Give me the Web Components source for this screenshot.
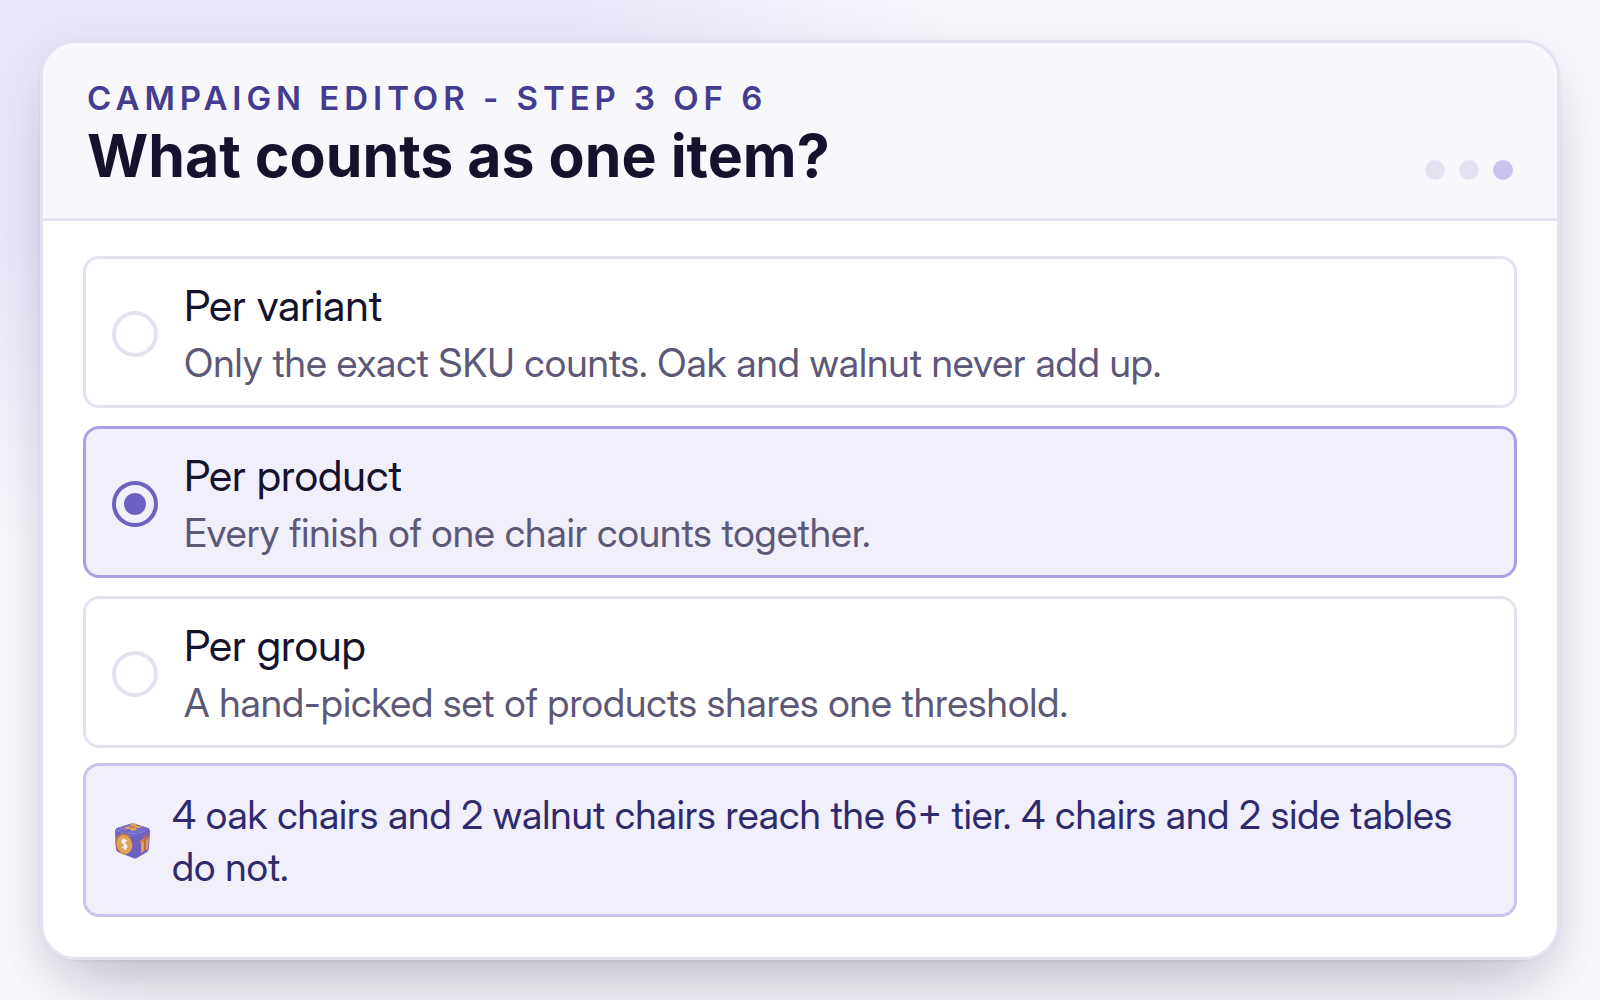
<!DOCTYPE html>
<html lang="en">
<head>
<meta charset="utf-8">
<meta name="viewport" content="width=device-width, initial-scale=1">
<title>Campaign editor</title>
<style>
*{box-sizing:border-box}
html{min-height:100%;background:#f8f7fc}
body{margin:0;padding:40px;min-height:100vh;font-family:"Inter Display",Inter,"Liberation Sans",sans-serif;color:#15122e;
background:radial-gradient(ellipse 780px 560px at 12% 0,#eae7f9 0%,#eae7f9 48%,#f8f7fc 100%) no-repeat #f8f7fc}
</style>
</head>
<body>
<editor-card>
  <step-header slot="header">
    <span slot="eyebrow">CAMPAIGN EDITOR - STEP 3 OF 6</span>
    <span slot="title">What counts as one item?</span>
  </step-header>
  <option-list>
    <option-card><span slot="label">Per variant</span><span slot="hint">Only the exact SKU counts. Oak and walnut never add up.</span></option-card>
    <option-card checked><span slot="label">Per product</span><span slot="hint">Every finish of one chair counts together.</span></option-card>
    <option-card><span slot="label">Per group</span><span slot="hint">A hand-picked set of products shares one threshold.</span></option-card>
  </option-list>
  <info-note>4 oak chairs and 2 walnut chairs reach the 6+ tier. 4 chairs and 2 side tables do not.</info-note>
</editor-card>

<script>
const define = (name, html, setup) => customElements.define(name, class extends HTMLElement {
  constructor() {
    super();
    const template = document.createElement('template');
    template.innerHTML = '<style>*{box-sizing:border-box}</style>' + html;
    this.attachShadow({mode: 'open'}).append(template.content.cloneNode(true));
    if (setup) setup(this, this.shadowRoot);
  }
});

define('editor-card', `
<style>
:host{display:block;border:3px solid #e4e2f0;border-radius:36px;background:#fff;overflow:hidden;
  box-shadow:0 1px 3px rgba(21,18,46,.06),0 44px 64px -36px rgba(21,18,46,.24),0 16px 56px rgba(21,18,46,.1)}
main{display:flex;flex-direction:column;gap:15px;padding:35px 40px 40px}
</style>
<slot name="header"></slot>
<main><slot></slot></main>`);

define('step-header', `
<style>
:host{display:block}
header{display:flex;justify-content:space-between;align-items:flex-end;gap:24px;padding:33px 44px 26px;background:#f8f7fc;border-bottom:3px solid #e4e2f0;font-family:Inter,"Liberation Sans",sans-serif}
p{margin:0;font-size:33px;line-height:44px;font-weight:600;letter-spacing:.15em;color:#443c8e}
h1{margin:0;font-size:59px;line-height:72px;font-weight:700}
.dots{display:flex;gap:14px;margin-bottom:12px}
i{width:20px;height:20px;border-radius:50%;background:#e4e2f0}
i:last-child{background:#c9c3f0}
</style>
<header>
  <div><p><slot name="eyebrow"></slot></p><h1><slot name="title"></slot></h1></div>
  <div class="dots" aria-hidden="true"><i></i><i></i><i></i></div>
</header>`);

define('option-list', `
<style>
:host{display:block}
div{display:flex;flex-direction:column;gap:18px}
</style>
<div role="radiogroup" aria-label="What counts as one item?"><slot></slot></div>`, host => {
  host.addEventListener('choose', event => {
    for (const option of host.querySelectorAll('option-card')) {
      const on = option === event.target;
      option.toggleAttribute('checked', on);
      option.shadowRoot.querySelector('input').checked = on;
    }
  });
});

define('option-card', `
<style>
:host{display:block}
label{display:flex;align-items:center;gap:26px;padding:17px 26px 13px;border:3px solid #e4e2f0;border-radius:16px;background:#fff;cursor:pointer}
:host([checked]) label{border-color:#a9a1e4;background:#f1effb}
input{appearance:none;flex:none;display:grid;place-items:center;width:46px;height:46px;margin:0;border:4px solid #e4e2f0;border-radius:50%}
input:checked{border-color:#6b61c0}
input:checked::before{content:"";width:22px;height:22px;border-radius:50%;background:#6b61c0}
.text{display:flex;flex-direction:column}
.name{font-size:43px;line-height:58px}
.hint{font-size:39px;line-height:58px;color:#5d5877}
</style>
<label><input type="radio"><span class="text"><span class="name"><slot name="label"></slot></span><span class="hint"><slot name="hint"></slot></span></span></label>`,
(host, root) => {
  const input = root.querySelector('input');
  input.checked = host.hasAttribute('checked');
  input.addEventListener('change', () => host.dispatchEvent(new CustomEvent('choose', {bubbles: true})));
});

define('info-note', `
<style>
:host{display:flex;align-items:center;gap:20px;padding:23px 26px 21px;border:3px solid #c9c3f0;border-radius:16px;background:#f1effb;color:#2f2a6b}
svg{flex:none;width:40px;height:40px}
p{margin:0;font-size:39px;line-height:52px}
</style>
<svg viewBox="0 0 40 40" aria-hidden="true">
  <path d="M5 7 18 3Q20 2 23 3L36 7Q38 8 38 10L37 27Q37 29 35 31L25 37Q23 38 21 37L6 31Q4 30 4 28L3 10Q3 8 5 7Z" fill="#6c60c3"/>
  <path d="M5 7 18 3Q20 2 23 3L36 7Q38 8 36 9L26 14Q24 15 21 14L4 10Q3 8 5 7Z" fill="#7569c9"/>
  <path d="M4 9 12 13 20 15" fill="none" stroke="#a9a0e2" stroke-dasharray="1 1"/>
  <path d="M8 7 15 9M16 12l8 1M28 12l5-2" stroke="#aaa1e3" stroke-dasharray="1 1"/>
  <path d="M12 6 19 5 18 3Q21 1 24 3L25 5 30 5 28 7 24 7 25 9 20 10 18 8 14 8Z" fill="#dca05a"/>
  <path d="M18 6h5" stroke="#b97545" stroke-width="1.500"/>
  <ellipse cx="12" cy="23" rx="8.500" ry="10.500" transform="rotate(-14 12 23)" fill="#bd7940"/>
  <ellipse cx="12.500" cy="23.500" rx="7.500" ry="9.500" transform="rotate(-14 12.500 23.500)" fill="#e0a558"/>
  <path d="M14.500 20.500Q12.500 18 10.500 19.500C8.500 22.500 15.500 23 14.500 26Q12.500 28 10.500 25.500M11.500 17.500l2 11.500" fill="none" stroke="#f4eef1" stroke-width="1.800"/>
  <path d="M29 19 37 16 36 28 29 32Z" fill="#dda05b"/>
  <path d="M28 19.500 37.500 15.500V18.500L28 22.500Z" fill="#d07f48"/>
  <path d="M33 18V30" stroke="#b76f42" stroke-width="2"/>
  <path d="M32 17 30 14 33 15 35 12 36 15Z" fill="#b96d48"/>
</svg>
<p><slot></slot></p>`);
</script>
</body>
</html>
